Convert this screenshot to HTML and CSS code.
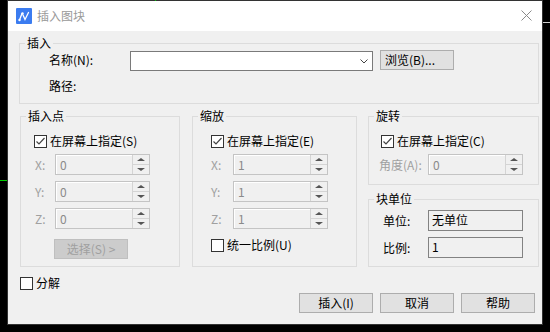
FILE: index.html
```html
<!DOCTYPE html>
<html lang="zh">
<head>
  <meta charset="UTF-8" />
  <title>插入图块</title>
  <link rel="stylesheet" href="styles.css">
</head>
<body>
  <div class="screen">
    <span class="mark mark-left"></span>
    <span class="mark mark-top"></span>
    <span class="mark mark-right"></span>

    <div class="dialog">
      <div class="titlebar">
        <svg class="app-icon" width="16" height="16" viewBox="0 0 16 16">
          <rect width="16" height="16" rx="1" fill="#3b7cf0"/>
          <path d="M3.5 12 L6 5.5 M7 7 L9 11.5 L12.5 4.5" stroke="#fff" stroke-width="1.3" fill="none" stroke-linecap="round"/>
          <circle cx="3.5" cy="12" r="1.2" fill="#fff"/>
          <circle cx="6.5" cy="5.5" r="1.2" fill="#fff"/>
        </svg>
        <span class="title">插入图块</span>
        <svg class="close" width="11" height="11" viewBox="0 0 11 11">
          <path d="M0.5 0.5 L10.5 10.5 M10.5 0.5 L0.5 10.5" stroke="#8a8a8a" stroke-width="1"/>
        </svg>
      </div>

      <div class="body">
        <div class="group g-insert">
          <div class="group-title">插入</div>
          <div class="name-row">
            <span class="lbl">名称(N):</span>
            <div class="combo">
              <svg width="8" height="5" viewBox="0 0 8 5"><path d="M0.5 0.5 L4 4 L7.5 0.5" stroke="#444" fill="none"/></svg>
            </div>
            <button class="btn browse">浏览(B)...</button>
          </div>
          <div class="path-row">路径:</div>
        </div>

        <div class="mid">
          <div class="group g-point">
            <div class="group-title">插入点</div>
            <div class="chk-row"><span class="check on"></span>在屏幕上指定(S)</div>
            <div class="field-row"><span class="field-lbl">X:</span><div class="spin"><span class="spin-val">0</span><span class="spin-btns"><i class="up"></i><i class="down"></i></span></div></div>
            <div class="field-row"><span class="field-lbl">Y:</span><div class="spin"><span class="spin-val">0</span><span class="spin-btns"><i class="up"></i><i class="down"></i></span></div></div>
            <div class="field-row"><span class="field-lbl">Z:</span><div class="spin"><span class="spin-val">0</span><span class="spin-btns"><i class="up"></i><i class="down"></i></span></div></div>
            <button class="btn btn-select">选择(S) &gt;</button>
          </div>

          <div class="group g-scale">
            <div class="group-title">缩放</div>
            <div class="chk-row"><span class="check on"></span>在屏幕上指定(E)</div>
            <div class="field-row"><span class="field-lbl">X:</span><div class="spin"><span class="spin-val">1</span><span class="spin-btns"><i class="up"></i><i class="down"></i></span></div></div>
            <div class="field-row"><span class="field-lbl">Y:</span><div class="spin"><span class="spin-val">1</span><span class="spin-btns"><i class="up"></i><i class="down"></i></span></div></div>
            <div class="field-row"><span class="field-lbl">Z:</span><div class="spin"><span class="spin-val">1</span><span class="spin-btns"><i class="up"></i><i class="down"></i></span></div></div>
            <div class="chk-row uniform"><span class="check"></span>统一比例(U)</div>
          </div>

          <div class="col3">
            <div class="group g-rot">
              <div class="group-title">旋转</div>
              <div class="chk-row"><span class="check on"></span>在屏幕上指定(C)</div>
              <div class="field-row"><span class="field-lbl">角度(A):</span><div class="spin"><span class="spin-val">0</span><span class="spin-btns"><i class="up"></i><i class="down"></i></span></div></div>
            </div>
            <div class="group g-unit">
              <div class="group-title">块单位</div>
              <div class="ro-row"><span class="ro-lbl">单位:</span><div class="ro-box">无单位</div></div>
              <div class="ro-row"><span class="ro-lbl">比例:</span><div class="ro-box">1</div></div>
            </div>
          </div>
        </div>

        <div class="explode"><span class="check"></span>分解</div>

        <div class="actions">
          <button class="btn">插入(I)</button>
          <button class="btn">取消</button>
          <button class="btn">帮助</button>
        </div>
      </div>
    </div>
  </div>
</body>
</html>
```

FILE: styles.css
```css
html, body {
  margin: 0;
  background: #000;
}
body {
  font-family: "Noto Sans CJK SC", "Noto Sans", sans-serif;
  font-size: 12px;
  color: #000;
}
.screen {
  position: relative;
  width: 550px;
  height: 332px;
  overflow: hidden;
}
.mark {
  position: absolute;
  height: 1px;
  z-index: 2;
}
.mark-left {
  left: 0;
  top: 180px;
  width: 7px;
  background: #00d200;
}
.mark-top {
  left: 155px;
  top: 0;
  width: 1px;
  background: #00c000;
}
.mark-right {
  left: 543px;
  top: 22px;
  width: 7px;
  background: #cfcfcf;
}

.dialog {
  margin-left: 7px;
  width: 536px;
  height: 325px;
  box-sizing: border-box;
  border: 1px solid #333;
  background: #f0f0f0;
}
.titlebar {
  height: 30px;
  background: #fff;
  display: flex;
  align-items: center;
  padding: 0 10px 0 8px;
}
.title {
  margin-left: 5px;
  color: #999;
  line-height: 14px;
}
.close {
  margin-left: auto;
  margin-top: -1px;
}

.body {
  padding: 12px 3px 0 11px;
}
.group {
  border: 1px solid #dcdcdc;
  box-sizing: border-box;
}
.group-title {
  display: table;
  margin: -8px 0 0 5px;
  padding: 0 2px;
  background: #f0f0f0;
  line-height: 14px;
}

/* 插入 */
.g-insert {
  width: 520px;
  height: 61px;
}
.name-row {
  display: flex;
  align-items: flex-start;
  margin: 1px 0 0 29px;
  height: 20px;
}
.lbl {
  width: 81px;
  line-height: 17px;
}
.combo {
  width: 243px;
  height: 20px;
  box-sizing: border-box;
  border: 1px solid #7a7a7a;
  background: #fff;
  display: flex;
  align-items: center;
  justify-content: flex-end;
  padding: 1px 4px 0 0;
}
.path-row {
  margin: 8px 0 0 29px;
  line-height: 14px;
}

.btn {
  font: inherit;
  color: #000;
  padding: 0;
  width: 74px;
  height: 20px;
  box-sizing: border-box;
  border: 1px solid #adadad;
  background: #e1e1e1;
  line-height: 16px;
}
.browse {
  margin: -1px 0 0 7px;
  text-align: left;
  padding-left: 4px;
}

/* middle row */
.mid {
  display: flex;
  margin: 12px 0 0 1px;
}
.g-point {
  width: 160px;
  height: 151px;
}
.g-scale {
  width: 165px;
  height: 151px;
  margin-left: 12px;
}
.col3 {
  width: 171px;
  margin-left: 11px;
  display: flex;
  flex-direction: column;
}
.g-rot {
  height: 69px;
}
.g-unit {
  height: 68px;
  margin-top: 14px;
}

.chk-row {
  display: flex;
  align-items: center;
  height: 14px;
  line-height: 14px;
  margin-top: 11px;
}
.check {
  width: 13px;
  height: 13px;
  box-sizing: border-box;
  border: 1px solid #333;
  background: #fff;
  margin-right: 3px;
  flex: none;
}
.check.on {
  background: #fff url("data:image/svg+xml;utf8,<svg xmlns='http://www.w3.org/2000/svg' width='11' height='11'><path d='M1.5 5.5 L4 8 L9.5 2' stroke='%23444' stroke-width='1.2' fill='none'/></svg>") no-repeat center;
}

.field-row {
  display: flex;
  align-items: center;
  height: 21px;
  margin-top: 6px;
}
.field-lbl {
  color: #a0a0a0;
  line-height: 14px;
}
.spin {
  width: 95px;
  height: 21px;
  box-sizing: border-box;
  border: 1px solid #c4c4c4;
  background: #f0f0f0;
  display: flex;
}
.spin-val {
  flex: 1;
  padding-left: 3px;
  line-height: 17px;
  color: #8a8a8a;
  border-left: 1px solid #fff;
  border-top: 1px solid #fff;
}
.spin-btns {
  width: 16px;
  display: flex;
  flex-direction: column;
  border-left: 1px solid #d4d4d4;
}
.spin-btns i {
  flex: 1;
  display: flex;
  align-items: center;
  justify-content: center;
}
.spin-btns i.up {
  border-bottom: 1px solid #d4d4d4;
}
.spin-btns i::before {
  content: "";
  width: 0;
  height: 0;
  border-left: 4px solid transparent;
  border-right: 4px solid transparent;
}
.spin-btns i.up::before {
  border-bottom: 3px solid #555;
}
.spin-btns i.down::before {
  border-top: 3px solid #555;
}

.g-point .chk-row { margin-left: 13px; }
.g-point .field-row { margin-left: 14px; }
.g-point .field-lbl { width: 20px; }
.g-scale .chk-row { margin-left: 18px; }
.g-scale .field-row { margin-left: 18px; }
.g-scale .field-lbl { width: 22px; }
.g-scale .uniform { margin-top: 9px; }
.g-rot .chk-row { margin-left: 12px; }
.g-rot .field-row { margin-left: 10px; }
.g-rot .field-lbl { width: 49px; }

.btn-select {
  margin: 10px 0 0 33px;
  background: #cccccc;
  border-color: #bfbfbf;
  color: #a0a0a0;
}

.ro-row {
  display: flex;
  align-items: center;
  height: 21px;
  margin: 4px 0 0 14px;
}
.ro-row + .ro-row {
  margin-top: 6px;
}
.ro-lbl {
  width: 45px;
  line-height: 14px;
}
.ro-box {
  width: 95px;
  height: 21px;
  box-sizing: border-box;
  border: 1px solid #828282;
  background: #f0f0f0;
  padding-left: 3px;
  line-height: 18px;
}

/* bottom */
.explode {
  display: flex;
  align-items: center;
  height: 14px;
  line-height: 14px;
  margin: 9px 0 0 1px;
}
.actions {
  display: flex;
  justify-content: flex-end;
  gap: 7px;
  margin-top: 3px;
  padding-right: 4px;
}
```
